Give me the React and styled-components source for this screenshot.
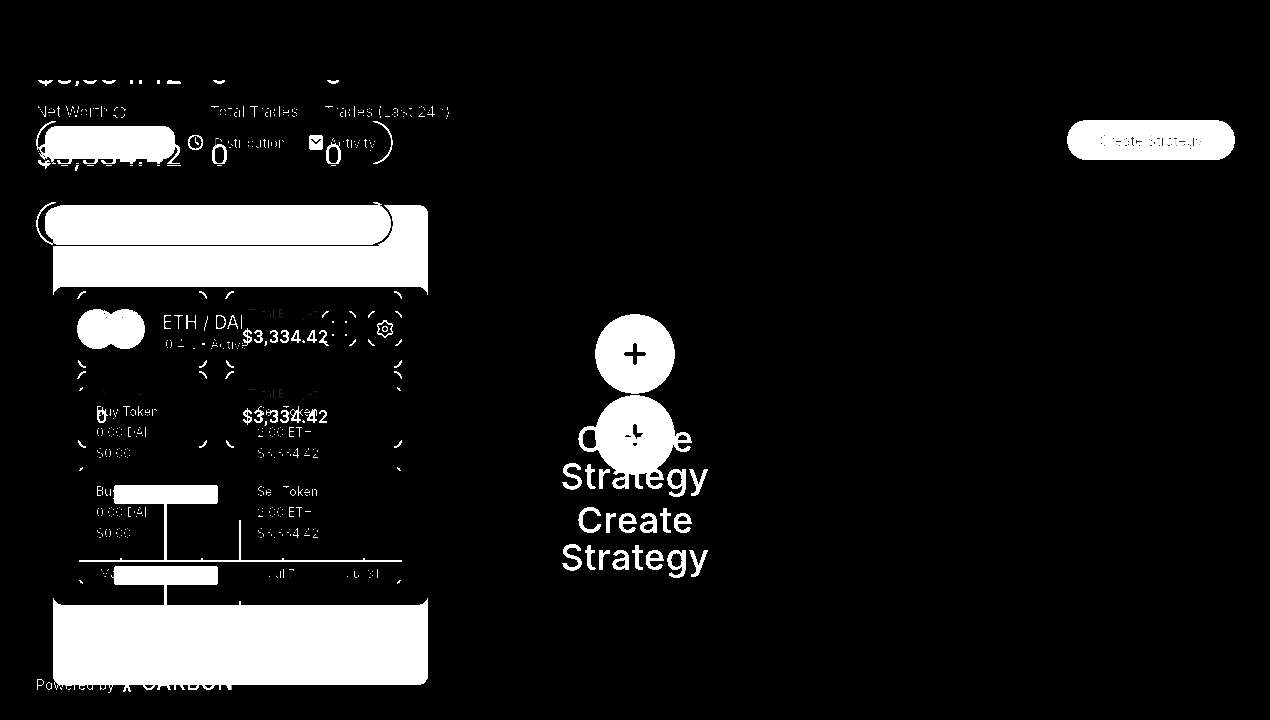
import React from "react";
import styled, { createGlobalStyle, css } from "styled-components";
import { Clock, Plus, RefreshCw, Settings } from "lucide-react";

const GlobalStyle = createGlobalStyle`
  html, body { margin: 0; padding: 0; background: #000; }
`;

const DIM = "#858585";

// outline that only shows at the corners of a box
const cornerRing = (size, open) => css`
  position: relative;
  &::before {
    content: "";
    position: absolute;
    inset: 0;
    border: 2px solid #fff;
    border-radius: ${open === undefined ? size + 2 : 8}px;
    -webkit-mask-image:
      linear-gradient(to right, #000 ${size}px, transparent ${size}px, transparent calc(100% - ${size}px), #000 calc(100% - ${size}px)),
      linear-gradient(to bottom, #000 ${size}px, transparent ${size}px, transparent calc(100% - ${open ? 0 : size}px), ${open ? "transparent" : "#000"} calc(100% - ${open ? 0 : size}px));
    mask-image:
      linear-gradient(to right, #000 ${size}px, transparent ${size}px, transparent calc(100% - ${size}px), #000 calc(100% - ${size}px)),
      linear-gradient(to bottom, #000 ${size}px, transparent ${size}px, transparent calc(100% - ${open ? 0 : size}px), ${open ? "transparent" : "#000"} calc(100% - ${open ? 0 : size}px));
    mask-composite: intersect;
    -webkit-mask-composite: source-in;
  }
`;

const Stage = styled.div`
  display: grid;
  width: 1270px;
  height: 720px;
  overflow: hidden;
  background: #000;
  color: #fff;
  font-family: Inter, "Liberation Sans", sans-serif;
  filter: grayscale(1) contrast(60);
`;

const Layer = styled.div`
  grid-area: 1 / 1;
  min-width: 0;
  min-height: 0;
`;

/* stats */

const StatsLayer = styled(Layer)`
  padding: 80px 0 0 36px;
`;

const ClipValues = styled.div`
  height: 6px;
  overflow: hidden;
  > div { margin-top: -25px; }
`;

const StatRow = styled.div`
  display: grid;
  grid-template-columns: 174px 114px auto;
  margin-top: ${(p) => p.$top || 0}px;
`;

const StatLabel = styled.div`
  display: flex;
  align-items: center;
  gap: 3px;
  font-size: 15px;
  line-height: 20px;
  font-weight: 500;
  color: ${DIM};
  white-space: nowrap;
`;

const StatValue = styled.div`
  font-size: 30px;
  line-height: 36px;
  color: #fff;
`;

/* footer */

const FooterLayer = styled(Layer)`
  display: flex;
  align-items: flex-end;
  gap: 5px;
  align-self: end;
  padding: 0 0 27px 36px;
  height: 20px;
`;

const Powered = styled.span`
  font-size: 14px;
  line-height: 16px;
  font-weight: 500;
  color: #a0a0a0;
`;

const Brand = styled.span`
  font-size: 21px;
  line-height: 20px;
  letter-spacing: 0.6px;
  font-weight: 500;
  margin-left: 2px;
`;

/* side panel */

const PanelLayer = styled(Layer)`
  padding: 205px 0 0 53px;
`;

const Panel = styled.div`
  width: 375px;
  height: 480px;
  box-sizing: border-box;
  padding-top: 82px;
  background: #fff;
  border-radius: 9px;
`;

const Card = styled.div`
  position: relative;
  display: grid;
  height: 318px;
  overflow: hidden;
  background: #000;
  border-radius: 10px;
`;

const Sheet = styled.div`
  grid-area: 1 / 1;
  padding: ${(p) => p.$top}px 0 0 24px;
`;

const Tiles = styled.div`
  display: flex;
  gap: 17px;
`;

const Tile = styled.div`
  ${cornerRing(9)}
  box-sizing: border-box;
  width: ${(p) => p.$width}px;
  height: 79px;
  padding: 16px 0 0 ${(p) => p.$left}px;
`;

const TileLabel = styled.div`
  padding-left: 6px;
  font-size: 11.5px;
  line-height: 16px;
  font-weight: 500;
  color: #7e7e7e;
`;

const TileValue = styled.div`
  margin-top: 3px;
  font-size: 17px;
  line-height: 24px;
  font-weight: 600;
`;

const DetailBox = styled.div`
  ${(p) => cornerRing(5, !!p.$open)}
  box-sizing: border-box;
  width: 324px;
  height: 119px;
  margin: 17px 0 0 1px;
  padding-top: 15px;
`;

const Columns = styled.div`
  display: grid;
  grid-template-columns: 161px auto;
  padding-left: 18px;
`;

const Line = styled.div`
  font-size: 12.5px;
  line-height: 21px;
  font-weight: 500;
  color: ${(p) => (p.$bright ? "#989898" : DIM)};
  white-space: nowrap;
`;

const Axis = styled.div`
  display: grid;
  grid-template-columns: repeat(4, 81px);
  margin: 16px 0 0 1px;
  border-top: 2px solid #fff;
`;

const Tick = styled.div`
  position: relative;
  padding-top: 4px;
  text-align: center;
  font-size: 12px;
  line-height: 15px;
  font-weight: 500;
  color: ${DIM};
  &::before {
    content: "";
    position: absolute;
    left: 50%;
    top: -4px;
    width: 2px;
    height: 3px;
    background: #fff;
  }
`;

const Tooltip = styled.div`
  position: absolute;
  left: 61px;
  top: ${(p) => p.$top}px;
  width: 104px;
  height: 19px;
  border-radius: 3px;
  background: #fff;
  &::after {
    content: "";
    position: absolute;
    left: 50px;
    top: 19px;
    width: 3px;
    height: 58px;
    background: #fff;
  }
`;

const MarkerLine = styled.div`
  position: absolute;
  left: 186px;
  top: ${(p) => p.$top}px;
  width: 2px;
  height: 41px;
  background: #fff;
`;

const CardHeader = styled.div`
  grid-area: 1 / 1;
  align-self: start;
  display: flex;
  align-items: center;
  height: 37px;
  padding: 23px 25px 0 24px;
`;

const PairLogo = styled.div`
  display: flex;
  flex: none;
  width: 68px;
  span {
    flex: none;
    width: 40px;
    height: 40px;
    border-radius: 50%;
    background: #fff;
  }
  span + span { margin-left: -12px; }
`;

const PairText = styled.div`
  margin: 8px 0 0 17px;
  white-space: nowrap;
`;

const PairName = styled.div`
  font-size: 18px;
  line-height: 22px;
  font-weight: 500;
  color: #949494;
`;

const PairMeta = styled.div`
  margin-top: 3px;
  padding-left: 3px;
  font-size: 12.5px;
  line-height: 16px;
  font-weight: 500;
  color: ${DIM};
`;

const IconButtons = styled.div`
  display: flex;
  gap: 10px;
  margin-left: auto;
`;

const IconButton = styled.div`
  ${cornerRing(8)}
  display: grid;
  place-items: center;
  width: 36px;
  height: 37px;
  box-sizing: border-box;
`;

/* tabs */

const TabsLayer = styled(Layer)`
  display: flex;
  flex-direction: column;
  gap: 36px;
  padding: 120px 0 0 36px;
`;

const Track = styled.div`
  position: relative;
  display: flex;
  align-items: center;
  box-sizing: border-box;
  width: 357px;
  height: 45px;
  padding-left: 9px;
  &::before {
    content: "";
    position: absolute;
    inset: 0;
    border: 2px solid #fff;
    border-radius: 23px;
    mix-blend-mode: difference;
    -webkit-mask-image: linear-gradient(to right, #000 20px, transparent 20px, transparent calc(100% - 20px), #000 calc(100% - 20px));
    mask-image: linear-gradient(to right, #000 20px, transparent 20px, transparent calc(100% - 20px), #000 calc(100% - 20px));
  }
  &::after {
    content: "";
    position: absolute;
    left: 14px;
    right: 14px;
    bottom: 0;
    height: 1px;
    background: #000;
  }
`;

const ActiveTab = styled.div`
  display: grid;
  place-items: center;
  width: 130px;
  height: 33px;
  border-radius: 12px;
  background: #fff;
  font-size: 13px;
  color: #8a8a8a;
`;

const Tab = styled.div`
  display: flex;
  align-items: center;
  gap: ${(p) => p.$gap}px;
  margin-left: ${(p) => p.$left}px;
  font-size: 13px;
  font-weight: 500;
  color: ${DIM};
  white-space: nowrap;
`;

/* centre */

const CenterLayer = styled(Layer)`
  display: flex;
  flex-direction: column;
  align-items: center;
  padding-top: ${(p) => p.$top}px;
`;

const AddCircle = styled.div`
  display: grid;
  place-items: center;
  width: 80px;
  height: 80px;
  border-radius: 50%;
  background: #fff;
  color: #000;
`;

const EmptyTitle = styled.div`
  width: 200px;
  margin-top: 27px;
  text-align: center;
  font-size: 36px;
  line-height: 37px;
  letter-spacing: 0.4px;
  font-weight: 500;
`;

/* top right button */

const ActionLayer = styled(Layer)`
  display: flex;
  justify-content: flex-end;
  padding: 120px 35px 0 0;
`;

const CreateButton = styled.div`
  display: grid;
  place-items: center;
  width: 168px;
  height: 40px;
  border-radius: 20px;
  background: #fff;
  font-size: 14px;
  color: #7e7e7e;
`;

function StatValues() {
  return (
    <StatRow>
      <StatValue>$3,334.42</StatValue>
      <StatValue>0</StatValue>
      <StatValue>0</StatValue>
    </StatRow>
  );
}

function Tabs({ ghost }) {
  return (
    <Track>
      <ActiveTab>Overview</ActiveTab>
      <Tab $left={12} $gap={10}>
        <Clock size={17} strokeWidth={2.6} color="#fff" />
        Distribution
      </Tab>
      <Tab $left={23} $gap={6}>
        <svg width="14" height="15" viewBox="0 0 14 15">
          <rect width="14" height="15" rx="3" fill="#fff" />
          {!ghost && <path d="M2 4l5 4 5-4" fill="none" stroke="#000" strokeWidth="1.6" />}
        </svg>
        Activity
      </Tab>
    </Track>
  );
}

function Sheets({ top, open, chart }) {
  return (
    <Sheet $top={top}>
      <Tiles>
        <Tile $width={131} $left={19}>
          <TileLabel>Volume</TileLabel>
          <TileValue>0</TileValue>
        </Tile>
        <Tile $width={178} $left={17}>
          <TileLabel>Total Budget</TileLabel>
          <TileValue>$3,334.42</TileValue>
        </Tile>
      </Tiles>
      <DetailBox $open={open}>
        <Columns>
          <div>
            <Line $bright>Buy Token</Line>
            <Line>0.00 DAI</Line>
            <Line>$0.00</Line>
          </div>
          <div>
            <Line $bright>Sell Token</Line>
            <Line>2.00 ETH</Line>
            <Line>$3,334.42</Line>
          </div>
        </Columns>
        {chart && (
          <Axis>
            <Tick>May 19</Tick>
            <Tick>Jun 13</Tick>
            <Tick>Jul 7</Tick>
            <Tick>Jul 31</Tick>
          </Axis>
        )}
      </DetailBox>
    </Sheet>
  );
}

export default function App() {
  return (
    <>
      <GlobalStyle />
      <Stage>
        <StatsLayer>
          <ClipValues>
            <StatValues />
          </ClipValues>
          <StatRow $top={16}>
            <StatLabel>
              Net Worth <RefreshCw size={15} color="#a0a0a0" />
            </StatLabel>
            <StatLabel>Total Trades</StatLabel>
            <StatLabel>Trades (Last 24h)</StatLabel>
          </StatRow>
          <StatRow $top={15}>
            <StatValue>$3,334.42</StatValue>
            <StatValue>0</StatValue>
            <StatValue>0</StatValue>
          </StatRow>
        </StatsLayer>

        <FooterLayer>
          <Powered>Powered by</Powered>
          <svg width="14" height="14" viewBox="0 0 14 14">
            <path d="M3 1l3 6-2 6M10 1L8 7l2 6" fill="none" stroke="#fff" strokeWidth="2" />
          </svg>
          <Brand>CARBON</Brand>
        </FooterLayer>

        <PanelLayer>
          <Panel>
            <Card>
              <Sheets top={3} open />
              <Sheets top={83} chart />
              <CardHeader>
                <PairLogo>
                  <span />
                  <span />
                </PairLogo>
                <PairText>
                  <PairName>ETH / DAI</PairName>
                  <PairMeta>0.4% • Active</PairMeta>
                </PairText>
                <IconButtons>
                  <IconButton>
                    <svg width="15" height="15" viewBox="0 0 15 15" fill="#fff">
                      <rect x="0" y="0" width="2" height="2" />
                      <rect x="13" y="0" width="2" height="2" />
                      <rect x="0" y="13" width="2" height="2" />
                      <rect x="13" y="13" width="2" height="2" />
                    </svg>
                  </IconButton>
                  <IconButton>
                    <Settings size={20} strokeWidth={1.8} color="#e0e0e0" />
                  </IconButton>
                </IconButtons>
              </CardHeader>
              <Tooltip $top={198} />
              <Tooltip $top={279} />
              <MarkerLine $top={233} />
              <MarkerLine $top={314} />
            </Card>
          </Panel>
        </PanelLayer>

        <TabsLayer>
          <Tabs />
          <Tabs ghost />
        </TabsLayer>

        <CenterLayer $top={395}>
          <AddCircle>
            <Plus size={32} strokeWidth={2.6} />
          </AddCircle>
          <EmptyTitle>Create Strategy</EmptyTitle>
        </CenterLayer>
        <CenterLayer $top={314}>
          <AddCircle>
            <Plus size={32} strokeWidth={2.6} />
          </AddCircle>
          <EmptyTitle>Create Strategy</EmptyTitle>
        </CenterLayer>

        <ActionLayer>
          <CreateButton>Create Strategy</CreateButton>
        </ActionLayer>
      </Stage>
    </>
  );
}
